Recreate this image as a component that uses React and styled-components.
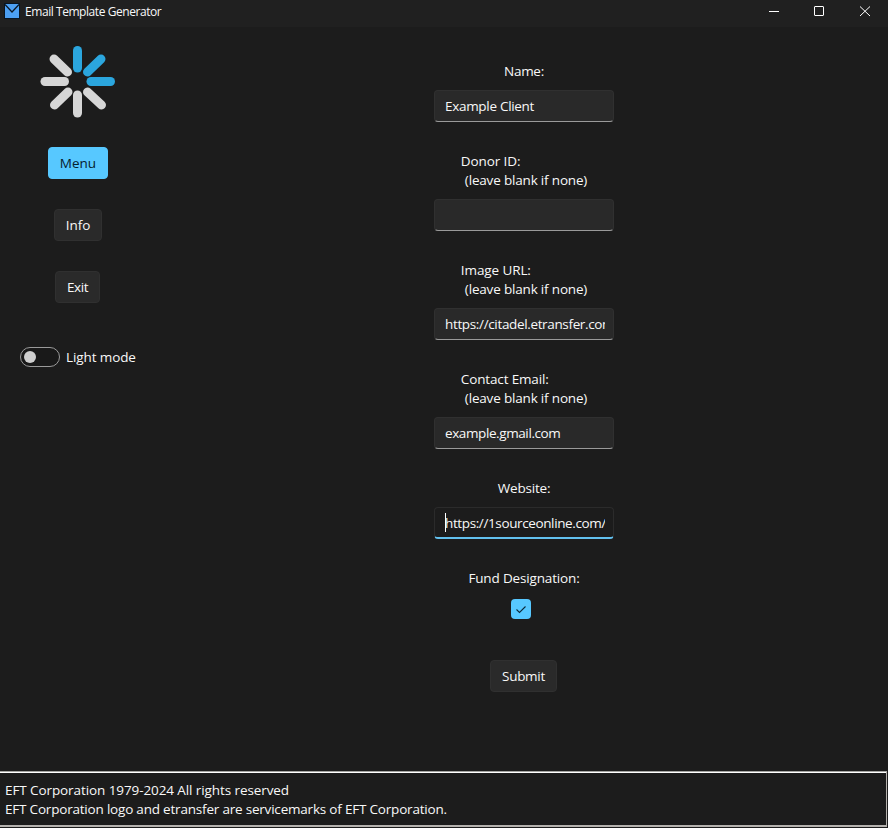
import React from "react";
import styled, { createGlobalStyle } from "styled-components";

const GlobalStyle = createGlobalStyle`
  * { box-sizing: border-box; }
  body {
    margin: 0;
    background: #1c1c1c;
    color: #f8f8f8;
    font: 13.5px/19px "Open Sans", "Noto Sans", sans-serif;
    overflow: hidden;
  }
  button, input { font: inherit; color: inherit; }
`;

const Window = styled.div`
  width: 888px;
  height: 828px;
  display: flex;
  flex-direction: column;
  background: #1c1c1c;
`;

const TitleBar = styled.header`
  height: 27px;
  flex: none;
  display: flex;
  align-items: flex-start;
  padding-left: 4px;
  background: #202020;
`;

const AppIcon = styled.svg`
  width: 16px;
  height: 16px;
  margin-top: 3px;
`;

const Title = styled.h1`
  margin: 3px auto 0 5px;
  font-size: 12px;
  font-weight: 400;
  line-height: 17px;
  letter-spacing: ${(p) => p.$spacing}px;
  white-space: nowrap;
`;

const WindowControls = styled.div`
  display: flex;
  svg {
    display: block;
    width: 46px;
    height: 24px;
    fill: none;
    stroke: #fff;
  }
`;

const Body = styled.main`
  flex: 1;
  display: flex;
`;

const Sidebar = styled.aside`
  width: 156px;
  padding-top: 17px;
  display: flex;
  flex-direction: column;
  align-items: center;
`;

const Logo = styled.svg`
  width: 78px;
  height: 76px;
  margin-bottom: 27px;
`;

const Button = styled.button`
  width: ${(p) => p.$width}px;
  height: 32px;
  flex: none;
  padding: 0;
  margin-right: ${(p) => p.$width % 2}px;
  border: 1px solid ${(p) => (p.$accent ? "#57c8ff" : "#303030")};
  border-radius: 4px;
  background: ${(p) => (p.$accent ? "#57c8ff" : "#2a2a2a")};
  color: ${(p) => (p.$accent ? "#06202e" : "#f8f8f8")};
  letter-spacing: ${(p) => p.$spacing || 0}px;
  line-height: 30px;
  white-space: nowrap;
`;

const Nav = styled.nav`
  display: flex;
  flex-direction: column;
  align-items: center;
  gap: 30px;
`;

const SwitchRow = styled.label`
  align-self: flex-start;
  display: flex;
  align-items: center;
  gap: 6px;
  height: 20px;
  margin: 44px 0 0 20px;
  letter-spacing: ${(p) => p.$spacing}px;
  white-space: nowrap;
`;

const Switch = styled.span`
  width: 40px;
  height: 20px;
  padding: 3px;
  border: 1px solid #9a9a9a;
  border-radius: 10px;
  background: #191919;
  &::before {
    content: "";
    display: block;
    width: 12px;
    height: 12px;
    border-radius: 50%;
    background: #cfcfcf;
  }
`;

const Form = styled.form`
  width: 180px;
  margin-left: 278px;
  padding-top: 35px;
  display: flex;
  flex-direction: column;
  align-items: center;
`;

const Field = styled.div`
  position: relative;
  display: flex;
  flex-direction: column;
  align-items: center;
  margin-bottom: 30px;
`;

const Label = styled.label`
  margin-bottom: 9px;
  letter-spacing: ${(p) => p.$spacing || 0}px;
  white-space: pre;
`;

const Hint = styled.span`
  display: block;
  padding-left: 4px;
  letter-spacing: -0.18px;
`;

const TextInput = styled.input`
  display: block;
  width: 180px;
  height: 32px;
  padding: 0 8px 0 10px;
  border: 1px solid ${(p) => (p.$active ? "#2b2b2b" : "#303030")};
  border-bottom: ${(p) => (p.$active ? "2px solid #62c0ee" : "1px solid #9a9a9a")};
  border-radius: 4px;
  background: ${(p) => (p.$active ? "#1c1c1c" : "#292929")};
  letter-spacing: ${(p) => p.$spacing || 0}px;
  outline: none;
`;

const Caret = styled.span`
  position: absolute;
  left: 11px;
  bottom: 7px;
  width: 1px;
  height: 19px;
  background: #fff;
`;

const CheckBox = styled.span`
  width: 20px;
  height: 20px;
  margin: 2px 6px 11px 0;
  border-radius: 4px;
  background: #57c8ff;
  svg { display: block; }
`;

const Footer = styled.footer`
  height: 56px;
  flex: none;
  width: 887px;
  margin-bottom: 1px;
  padding: 9px 0 0 5px;
  border: solid #b5b2ae;
  border-width: 1px 1px 2px 0;
  border-top-color: #a5a5a2;
  box-shadow: inset 0 1px #fff;
`;

const FooterLine = styled.p`
  margin: 0;
  white-space: nowrap;
  letter-spacing: ${(p) => p.$spacing || 0}px;
`;

const spokes = [
  [38.5, 6.5, 38.5, 24, "#2ba6de"],
  [62, 15, 48.5, 28, "#2ba6de"],
  [52, 37.5, 71.5, 37.5, "#2ba6de"],
  [48.5, 48, 62.5, 61, "#d6d6d6"],
  [38.5, 51, 38.5, 69, "#d6d6d6"],
  [29, 48, 15.5, 61, "#d6d6d6"],
  [25.5, 37.5, 6, 37.5, "#d6d6d6"],
  [28.5, 28, 15, 15, "#d6d6d6"],
];

const fields = [
  { label: "Name:", value: "Example Client", spacing: -0.3, valueSpacing: -0.3 },
  { label: "Donor ID:", hint: true, value: "", spacing: -0.1 },
  { label: "Image URL:", hint: true, value: "https://citadel.etransfer.com/", spacing: -0.1, valueSpacing: -0.35 },
  { label: "Contact Email:", hint: true, value: "example.gmail.com", spacing: -0.15, valueSpacing: -0.4 },
  { label: "Website:", value: "https://1sourceonline.com/", active: true, spacing: -0.2, valueSpacing: -0.38 },
];

export default function App() {
  return (
    <Window>
      <GlobalStyle />
      <TitleBar>
        <AppIcon viewBox="0 0 16 16">
          <rect x="0.5" y="0.5" width="15" height="15" fill="#4c9ff2" stroke="#091522" />
          <path d="M1 1.5L8 9L15 1.5" fill="none" stroke="#091522" strokeWidth="1.2" />
        </AppIcon>
        <Title $spacing={-0.44}>Email Template Generator</Title>
        <WindowControls>
          <svg viewBox="0 0 46 24"><path d="M19 11.5H29" /></svg>
          <svg viewBox="0 0 46 24"><rect x="18.5" y="6.5" width="9" height="9" rx="0.5" /></svg>
          <svg viewBox="0 0 46 24"><path d="M18 6.5L28 16M28 6.5L18 16" /></svg>
        </WindowControls>
      </TitleBar>
      <Body>
        <Sidebar>
          <Logo viewBox="0 0 78 76">
            {spokes.map(([x1, y1, x2, y2, color]) => (
              <line key={`${x1}-${y1}`} x1={x1} y1={y1} x2={x2} y2={y2} stroke={color} strokeWidth="9" strokeLinecap="round" />
            ))}
          </Logo>
          <Nav>
            <Button $width={60} $accent>Menu</Button>
            <Button $width={48}>Info</Button>
            <Button $width={45} $spacing={-0.4}>Exit</Button>
          </Nav>
          <SwitchRow $spacing={-0.1}><Switch />Light mode</SwitchRow>
        </Sidebar>
        <Form>
          {fields.map((f) => (
            <Field key={f.label}>
              <Label $spacing={f.spacing}>
                {f.label}
                {f.hint && <Hint>(leave blank if none)</Hint>}
              </Label>
              <TextInput defaultValue={f.value} $active={f.active} $spacing={f.valueSpacing} />
              {f.active && <Caret />}
            </Field>
          ))}
          <Field>
            <Label $spacing={-0.15}>Fund Designation:</Label>
            <CheckBox>
              <svg width="20" height="20" viewBox="0 0 20 20">
                <path d="M5.5 10.5L8.5 13.5L14.5 7.5" fill="none" stroke="#0a2a3a" strokeWidth="1.1" />
              </svg>
            </CheckBox>
          </Field>
          <Button type="button" $width={67} $spacing={-0.3}>Submit</Button>
        </Form>
      </Body>
      <Footer>
        <FooterLine $spacing={-0.09}>EFT Corporation 1979-2024 All rights reserved</FooterLine>
        <FooterLine $spacing={-0.2}>EFT Corporation logo and etransfer are servicemarks of EFT Corporation.</FooterLine>
      </Footer>
    </Window>
  );
}
